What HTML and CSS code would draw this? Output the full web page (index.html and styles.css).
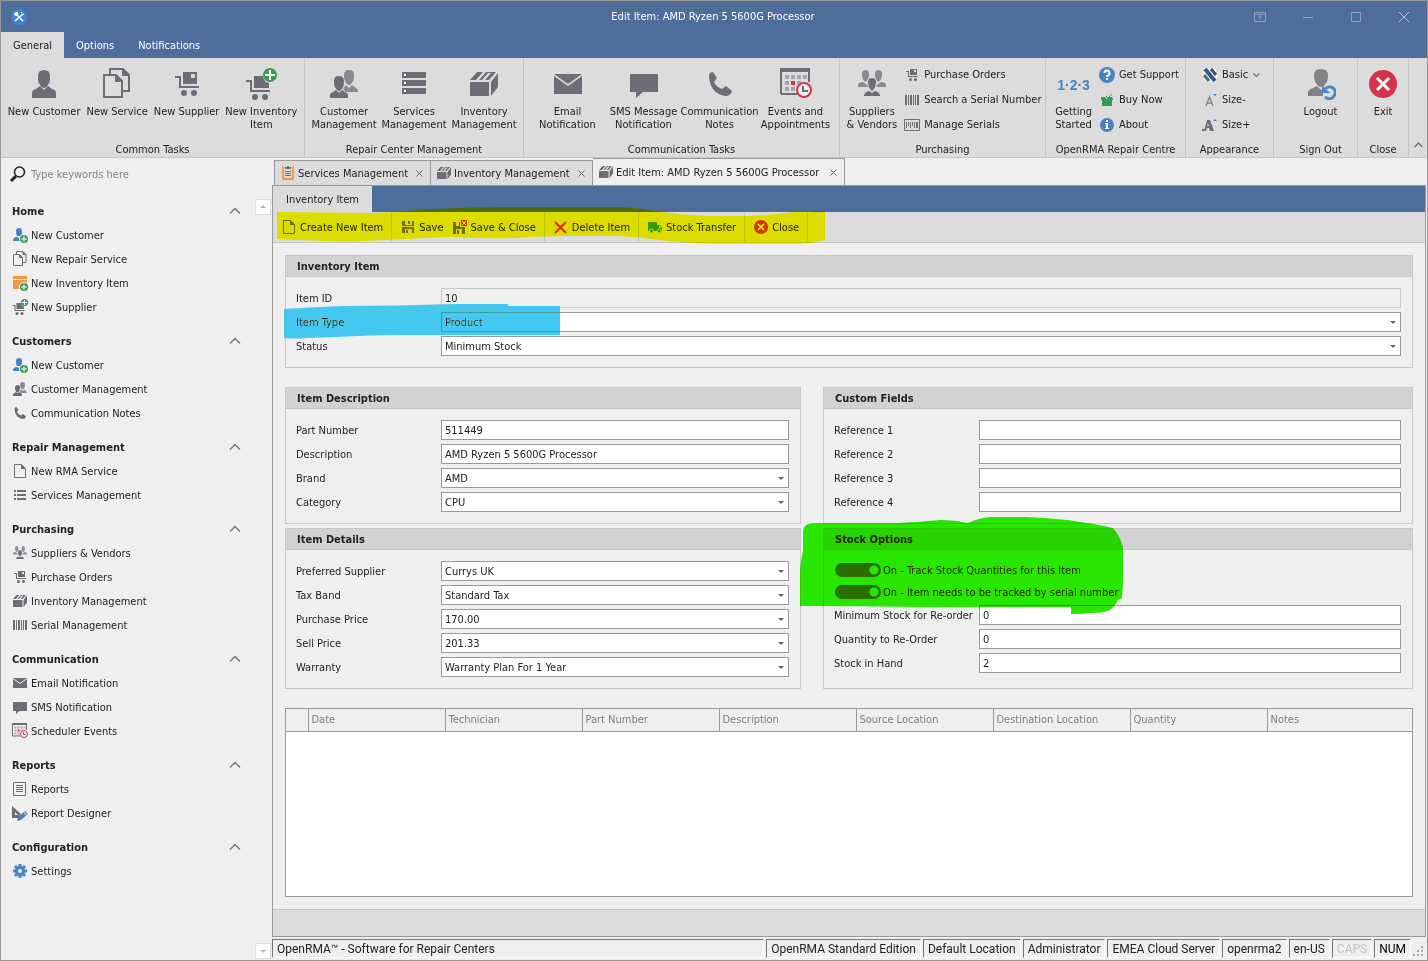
FILE: index.html
```html
<!DOCTYPE html>
<html lang="en">
<head>
<meta charset="utf-8">
<meta name="viewport" content="width=device-width, initial-scale=1">
<title>Edit Item: AMD Ryzen 5 5600G Processor</title>
<link rel="stylesheet" href="styles.css">
</head>
<body>
<svg class="sprite" aria-hidden="true">
  <symbol id="plus" viewBox="0 0 14 14"><circle cx="7" cy="7" r="7" fill="#3a9a55"/><path d="M7 2v10M2 7h10" stroke="#fff" stroke-width="2"/></symbol>
  <symbol id="person" viewBox="0 0 32 32"><path d="M10 8q0-6 6-6t6 6-1 7q-2 5-5 5t-5-5q-1-1-1-7zM4 30v-5q0-3 4-4l4-3 4 4 4-4 4 3q4 1 4 4v5z"/></symbol>
  <symbol id="docs" viewBox="0 0 32 32"><path d="M3 7h12l6 6v16H3zM9 7V1h13l6 6v16h-7" fill="none" stroke="currentColor" stroke-width="2"/><path d="M14 6l8 8h-8zM21 0l8 8h-8z"/></symbol>
  <symbol id="doc" viewBox="0 0 16 16"><path d="M2.500 1.500h7l4 4v9h-11z" fill="none" stroke="currentColor" stroke-width="1"/><path d="M9 1v5h5z"/></symbol>
  <symbol id="cart" viewBox="0 0 32 32"><path d="M4 8h6v2H4zM8 8h2v12H8zM8 18h20v2H8z"/><path d="M12 4h14v12H12zM20 6v4h4V6z" fill-rule="evenodd"/><circle cx="13" cy="25" r="3"/><circle cx="23" cy="25" r="3"/></symbol>
  <symbol id="cartplus" viewBox="0 0 32 32"><path d="M1 12h6v2H1zM5 12h2v12H5zM5 22h20v2H5zM9 8h9q1 7 6 7v5H9z"/><circle cx="10" cy="29" r="3"/><circle cx="20" cy="29" r="3"/><use href="#plus" x="18" y="0" width="14" height="14"/></symbol>
  <symbol id="people" viewBox="0 0 32 32"><g opacity=".75"><path d="M16 7q0-5 5-5t5 5-1 6q-2 4-4 4t-4-4q-1-1-1-6zM17 24q0-2-2-3l3-4 3 3 3-3 4 3q2 1 2 3v1z"/></g><path d="M6 13q0-5 5-5t5 5-1 6q-2 4-4 4t-4-4q-1-1-1-6zM2 30v-3q0-2 3-3l3-2 3 3 3-3 3 2q3 1 3 3v3z"/></symbol>
  <symbol id="servers" viewBox="0 0 32 32"><path d="M4 4h24v6H4zM4 12h24v6H4zM4 20h24v6H4z"/><path d="M6 6h2v2H6zM6 14h2v2H6zM6 22h2v2H6z" fill="#fff"/></symbol>
  <symbol id="crate" viewBox="0 0 32 32"><path d="M2 14h19v14H2zM23 14l7-9v14l-7 9zM2 12l7-8h6l-7 8zM11 12l7-8h10l-7 8h-4l6-7h-3l-6 7z"/></symbol>
  <symbol id="mail" viewBox="0 0 32 32"><path d="M2 6h28L16 16zM2 8l14 10L30 8v18H2z"/></symbol>
  <symbol id="sms" viewBox="0 0 32 32"><path d="M2 6h28v18H15l-7 6v-6H2z"/></symbol>
  <symbol id="phone" viewBox="0 0 32 32"><path d="M5 8q0-4 4-4l4 6-3 4q2 5 8 7l4-3 6 5q-1 5-7 5Q6 25 5 8z"/></symbol>
  <symbol id="calendar" viewBox="0 0 32 32"><path d="M1 26V1h28v13M1 26h16" fill="none" stroke="currentColor" stroke-width="2"/><path d="M0 0h30v4H0z"/><path d="M5 7h4v4H5zM11 7h4v4h-4zM17 7h4v4h-4zM23 7h4v4h-4zM5 13h4v4H5zM17 13h4v3h-4zM5 19h4v4H5zM11 19h4v4h-4z" opacity=".5"/><path d="M11 13h4v4h-4z" fill="#d5334b"/><circle cx="24" cy="22" r="7" fill="#eee" stroke="#d5334b" stroke-width="2"/><path d="M23 18v5h5" fill="none" stroke="currentColor" stroke-width="2"/></symbol>
  <symbol id="team" viewBox="0 0 32 32"><g opacity=".75"><path d="M6 6q0-4 3.500-4T13 6q0 6-3.500 8Q6 12 6 6zM19 6q0-4 3.500-4T26 6q0 6-3.500 8Q19 12 19 6zM2 18q0-4 5-4l3 2 2 2v1H2zM20 18l2-2 3-2q5 0 5 4v1h-9z"/></g><path d="M12 14q0-4 4-4t4 4q0 6-4 9-4-3-4-9zM8 28q0-4 5-5l3 2 3-2q5 1 5 5z"/></symbol>
  <symbol id="bars" viewBox="0 0 16 16"><path d="M1 3h2v10H1zM4 3h1v10H4zM6 3h2v10H6zM9 3h1v10H9zM11 3h1v10h-1zM13 3h2v10h-2z"/></symbol>
  <symbol id="barbox" viewBox="0 0 16 16"><path d="M.5 2.500h15v11H.5z" fill="none" stroke="currentColor"/><path d="M2 5h1v6H2zM4 5h1v4H4zM6 5h1v6H6zM8 5h1v4H8zM10 5h1v6h-1zM12 5h2v6h-2z"/></symbol>
  <symbol id="help" viewBox="0 0 16 16"><circle cx="8" cy="8" r="8" fill="#4583c4"/><path d="M5.500 6q0-2.500 2.500-2.500T10.500 6 8 9v1" fill="none" stroke="#fff" stroke-width="2"/><path d="M7 11h2v2H7z" fill="#fff"/></symbol>
  <symbol id="info" viewBox="0 0 16 16"><circle cx="8" cy="8" r="7" fill="#4583c4"/><path d="M7 3h2v2H7zM6 6h3v5h1v1H6v-1h1V7H6z" fill="#fff"/></symbol>
  <symbol id="buy" viewBox="0 0 16 16"><path d="M3 8h10v6H3zM2 5h4l2 2 2-2h3l1 2v1H2z" fill="#3a9a55"/><path d="M7 4l2 2 4-4" fill="none" stroke="#3a9a55"/></symbol>
  <symbol id="skin" viewBox="0 0 16 16"><path d="M3 1h10l3 6-2 8H4L0 8z" fill="#f4f4f4"/><path d="M3 2l10 12" stroke="#34568c" stroke-width="4"/><path d="M9 2l5 6" stroke="#4c4470" stroke-width="3"/><path d="M2 8l5 6" stroke="#3c7d68" stroke-width="3"/></symbol>
  <symbol id="aminus" viewBox="0 0 16 16"><path d="M4 14l3.500-9L11 14M5 11h5" fill="none" stroke="#85858a" stroke-width="1.500"/><path d="M11 2h4l-2 2z" fill="#4583c4"/></symbol>
  <symbol id="aplus" viewBox="0 0 16 16"><path d="M2 14L5 3h3l4 11H8l-1-3H5l-1 3zM6 6L5 9h2z" fill-rule="evenodd"/><path d="M0 12h4v2H0z"/><path d="M11 4h4l-2-2z" fill="#4583c4"/></symbol>
  <symbol id="logout" viewBox="0 0 32 32"><path d="M10 7q0-6 7-6t7 6-2 8q-2 4-5 4t-5-4q-2-2-2-8zM4 28v-4q0-2 5-4l4-2 4 4 2-2v8z" fill="#838383"/><path d="M21 21q4-4 8-1t1 8-9 1" fill="none" stroke="#4a88c7" stroke-width="3"/><path d="M18 17v8h8z" fill="#4a88c7"/></symbol>
  <symbol id="exit" viewBox="0 0 32 32"><circle cx="16" cy="16" r="14" fill="#d5334b"/><path d="M10 10l12 12M22 10L10 22" stroke="#fff" stroke-width="3"/></symbol>
  <symbol id="newcust" viewBox="0 0 16 16"><path d="M4 4q0-3 3-3t3 3-1 5H5Q4 7 4 4zM1 14q0-4 4-4l2 1 2-1 3 1v3z" fill="#4583c4"/><circle cx="11.500" cy="12" r="4.500" fill="#f0f0f0"/><use href="#plus" x="8" y="8" width="8" height="8"/></symbol>
  <symbol id="newinv" viewBox="0 0 16 16"><path d="M1 1h14v3H1zM1 5h14v9H1z" fill="#f29a42"/><circle cx="12" cy="12" r="5" fill="#f0f0f0"/><use href="#plus" x="8" y="8" width="8" height="8"/></symbol>
  <symbol id="list" viewBox="0 0 16 16"><path d="M2 3h2v2H2zM2 7h2v2H2zM2 11h2v2H2zM5 3h9v2H5zM5 7h9v2H5zM5 11h9v2H5z"/></symbol>
  <symbol id="report" viewBox="0 0 16 16"><path d="M1.500 1.500h12v13h-12zM4 4.500h7M4 6.500h7M4 8.500h7M4 10.500h7" fill="none" stroke="currentColor"/></symbol>
  <symbol id="designer" viewBox="0 0 16 16"><path d="M0 1v12h6l3-4zM3 7l3 3H3z" fill-rule="evenodd"/><path d="M5 16l1-4 7-6 3 3-7 6z" fill="#4583c4"/><path d="M12 7l2 3" stroke="#f0f0f0"/></symbol>
  <symbol id="gear" viewBox="0 0 16 16"><g stroke="#4583c4"><path d="M8 1v14M1 8h14M3 3l10 10M13 3L3 13" stroke-width="3"/></g><circle cx="8" cy="8" r="5" fill="#4583c4"/><circle cx="8" cy="8" r="2" fill="#f0f0f0"/></symbol>
  <symbol id="clip" viewBox="0 0 16 16"><path d="M4 2H3v12h10V2h-1" fill="none" stroke="#f29a42" stroke-width="2"/><path d="M5 2h2V1h2v1h2v2H5z"/><path d="M5 6.500h6M5 8.500h6M5 10.500h6" stroke="currentColor"/></symbol>
  <symbol id="save" viewBox="0 0 16 16"><path d="M2 2h12v5H2zM2 8h12v6H2zM5 2v4h7V2zM5 10v4h7v-4z" fill-rule="evenodd"/><path d="M8 2h2v3H8zM6 11h2v3H6z"/></symbol>
  <symbol id="saveclose" viewBox="0 0 16 16"><path d="M1 3h7v5h5v7H1zM4 3v4h3V3zM4 10v5h6v-5z" fill-rule="evenodd"/><path d="M5 11h2v4H5z"/><path d="M9 1h6v6H9z" fill="#d5334b"/><path d="M10 2l4 4M14 2l-4 4" stroke="#fff"/></symbol>
  <symbol id="delete" viewBox="0 0 16 16"><path d="M2 3l11 11M13 3L2 14" stroke="#d5334b" stroke-width="2"/></symbol>
  <symbol id="truck" viewBox="0 0 16 16"><path d="M1 3h9v9H1zM10 6h3l2 3v3h-5z" fill="#3a9a55"/><path d="M12 7h1l1 2h-2z" fill="#dcdcdc"/><g fill="#3a9a55" stroke="#dcdcdc"><circle cx="4.500" cy="12" r="2"/><circle cx="12" cy="12" r="2"/></g></symbol>
  <symbol id="x" viewBox="0 0 7 7"><path d="M.5 .5l6 6M6.500 .5l-6 6" stroke="currentColor" fill="none"/></symbol>
  <symbol id="up" viewBox="0 0 12 8"><path d="M1 6.500l5-5 5 5" fill="none" stroke="currentColor" stroke-width="1.500"/></symbol>
  <symbol id="down" viewBox="0 0 12 8"><path d="M2 2l4 4 4-4" fill="none" stroke="currentColor" stroke-width="1.500"/></symbol>
</svg>

<div class="window">
  <header class="titlebar">
    <svg class="logo" viewBox="0 0 16 16" aria-hidden="true"><circle cx="8" cy="8" r="8" fill="#3f86cf"/><path d="M4 4l8 8M12 5l-8 7" stroke="#fff" stroke-width="1.500"/><path d="M3 5l3-2 1 2-2 2zM10 4l1-1M13 5l-2 1" stroke="#fff" fill="#fff"/></svg>
    <h1>Edit Item: AMD Ryzen 5 5600G Processor</h1>
    <div class="winbtns">
      <button aria-label="Ribbon options"><svg viewBox="0 0 12 12"><path d="M.5 1.500h11v9H.5zM.5 3.500h11M6 9V5M4 6.500l2-2 2 2"/></svg></button>
      <button aria-label="Minimise"><svg viewBox="0 0 12 12"><path d="M1 6.500h10"/></svg></button>
      <button aria-label="Maximise"><svg viewBox="0 0 12 12"><path d="M1.500 1.500h9v9h-9z"/></svg></button>
      <button class="bright" aria-label="Close window"><svg viewBox="0 0 12 12"><path d="M1 1l10 10M11 1L1 11"/></svg></button>
    </div>
  </header>
  <nav class="menu"><button class="on">General</button><button>Options</button><button>Notifications</button></nav>

  <section class="ribbon">
    <div class="group g-common"><div class="tools">
      <button class="big"><svg><use href="#person"/></svg>New Customer</button>
      <button class="big"><svg><use href="#docs"/></svg>New Service</button>
      <button class="big"><svg><use href="#cart"/></svg>New Supplier</button>
      <button class="big"><svg><use href="#cartplus"/></svg>New Inventory<br>Item</button>
    </div><h2>Common Tasks</h2></div>
    <div class="group g-repair"><div class="tools">
      <button class="big"><svg><use href="#people"/></svg>Customer<br>Management</button>
      <button class="big"><svg><use href="#servers"/></svg>Services<br>Management</button>
      <button class="big"><svg><use href="#crate"/></svg>Inventory<br>Management</button>
    </div><h2>Repair Center Management</h2></div>
    <div class="group g-comm"><div class="tools wide">
      <button class="big"><svg><use href="#mail"/></svg>Email<br>Notification</button>
      <button class="big"><svg><use href="#sms"/></svg>SMS Message<br>Notification</button>
      <button class="big"><svg><use href="#phone"/></svg>Communication<br>Notes</button>
      <button class="big"><svg><use href="#calendar"/></svg>Events and<br>Appointments</button>
    </div><h2>Communication Tasks</h2></div>
    <div class="group g-purch"><div class="tools">
      <button class="big"><svg><use href="#team"/></svg>Suppliers<br>&amp; Vendors</button>
      <div class="stack">
        <button><svg><use href="#cart"/></svg>Purchase Orders</button>
        <button><svg><use href="#bars"/></svg>Search a Serial Number</button>
        <button><svg><use href="#barbox"/></svg>Manage Serials</button>
      </div>
    </div><h2>Purchasing</h2></div>
    <div class="group g-centre"><div class="tools">
      <button class="big"><span class="count">1·2·3</span>Getting<br>Started</button>
      <div class="stack">
        <button><svg><use href="#help"/></svg>Get Support</button>
        <button><svg><use href="#buy"/></svg>Buy Now</button>
        <button><svg><use href="#info"/></svg>About</button>
      </div>
    </div><h2>OpenRMA Repair Centre</h2></div>
    <div class="group g-look"><div class="tools">
      <div class="stack">
        <button><svg><use href="#skin"/></svg>Basic<svg class="tiny"><use href="#down"/></svg></button>
        <button><svg><use href="#aminus"/></svg>Size-</button>
        <button><svg><use href="#aplus"/></svg>Size+</button>
      </div>
    </div><h2>Appearance</h2></div>
    <div class="group g-sign"><div class="tools"><button class="big"><svg><use href="#logout"/></svg>Logout</button></div><h2>Sign Out</h2></div>
    <div class="group g-close"><div class="tools"><button class="big"><svg><use href="#exit"/></svg>Exit</button></div><h2>Close</h2></div>
    <button class="collapse" aria-label="Collapse ribbon"><svg><use href="#up"/></svg></button>
  </section>

  <div class="workspace">
    <aside class="sidebar">
      <label class="search"><svg viewBox="0 0 16 16"><circle cx="9.500" cy="6" r="5" fill="none" stroke="#222" stroke-width="1.500"/><path d="M6 10l-5 5" stroke="#222" stroke-width="3"/></svg><input type="search" placeholder="Type keywords here" aria-label="Search"></label>
      <div class="navwrap">
        <nav class="nav">
          <section><h3><button>Home<svg><use href="#up"/></svg></button></h3>
            <a href="#"><svg><use href="#newcust"/></svg>New Customer</a>
            <a href="#"><svg><use href="#docs"/></svg>New Repair Service</a>
            <a href="#"><svg><use href="#newinv"/></svg>New Inventory Item</a>
            <a href="#"><svg><use href="#cartplus"/></svg>New Supplier</a></section>
          <section><h3><button>Customers<svg><use href="#up"/></svg></button></h3>
            <a href="#"><svg><use href="#newcust"/></svg>New Customer</a>
            <a href="#"><svg><use href="#people"/></svg>Customer Management</a>
            <a href="#"><svg><use href="#phone"/></svg>Communication Notes</a></section>
          <section><h3><button>Repair Management<svg><use href="#up"/></svg></button></h3>
            <a href="#"><svg><use href="#doc"/></svg>New RMA Service</a>
            <a href="#"><svg><use href="#list"/></svg>Services Management</a></section>
          <section><h3><button>Purchasing<svg><use href="#up"/></svg></button></h3>
            <a href="#"><svg><use href="#team"/></svg>Suppliers &amp; Vendors</a>
            <a href="#"><svg><use href="#cart"/></svg>Purchase Orders</a>
            <a href="#"><svg><use href="#crate"/></svg>Inventory Management</a>
            <a href="#"><svg><use href="#bars"/></svg>Serial Management</a></section>
          <section><h3><button>Communication<svg><use href="#up"/></svg></button></h3>
            <a href="#"><svg><use href="#mail"/></svg>Email Notification</a>
            <a href="#"><svg><use href="#sms"/></svg>SMS Notification</a>
            <a href="#"><svg><use href="#calendar"/></svg>Scheduler Events</a></section>
          <section><h3><button>Reports<svg><use href="#up"/></svg></button></h3>
            <a href="#"><svg><use href="#report"/></svg>Reports</a>
            <a href="#"><svg><use href="#designer"/></svg>Report Designer</a></section>
          <section><h3><button>Configuration<svg><use href="#up"/></svg></button></h3>
            <a href="#"><svg><use href="#gear"/></svg>Settings</a></section>
        </nav>
        <div class="scroller">
          <button aria-label="Scroll up"><svg viewBox="0 0 14 14"><path d="M4 8l3-3 3 3z"/></svg></button>
          <button aria-label="Scroll down"><svg viewBox="0 0 14 14"><path d="M4 6h6L7 9z"/></svg></button>
        </div>
      </div>
    </aside>

    <main class="main">
      <div class="doctabs">
        <div class="doctab t1"><button class="name"><svg><use href="#clip"/></svg>Services Management</button><button class="x" aria-label="Close tab"><svg><use href="#x"/></svg></button></div>
        <div class="doctab t2"><button class="name"><svg><use href="#crate"/></svg>Inventory Management</button><button class="x" aria-label="Close tab"><svg><use href="#x"/></svg></button></div>
        <div class="doctab t3 on"><button class="name"><svg><use href="#crate"/></svg>Edit Item: AMD Ryzen 5 5600G Processor</button><button class="x" aria-label="Close tab"><svg><use href="#x"/></svg></button></div>
      </div>
      <div class="document">
        <div class="strip"><button class="on">Inventory Item</button></div>
        <div class="toolbar">
          <div class="set"><button><svg><use href="#doc"/></svg>Create New Item</button></div>
          <div class="set"><button><svg><use href="#save"/></svg>Save</button><button><svg><use href="#saveclose"/></svg>Save &amp; Close</button></div>
          <div class="set"><button><svg><use href="#delete"/></svg>Delete Item</button></div>
          <div class="set"><button><svg><use href="#truck"/></svg>Stock Transfer</button></div>
          <div class="set"><button><svg><use href="#exit"/></svg>Close</button></div>
          <svg class="mark mark-yellow" viewBox="0 0 552 40" aria-hidden="true"><path d="M4 6L97 7q24 0 48-3 44-3 88-3h115q18 1 34 4 26 4 52 5h40q24-1 48-4h18v-1l12 0v29q-16 4-30 4h-80q-30-1-56-4-22-3-40-4h-52q-26 0-52 2-34 1-67-1-42 2-85 4-18 1-37 0L4 33z"/></svg>
        </div>
        <form class="content">
          <fieldset class="panel">
            <h2>Inventory Item</h2>
            <div class="fields">
              <div class="row"><label for="f1">Item ID</label><input id="f1" value="10" readonly></div>
              <div class="row"><label for="f2">Item Type</label><span class="pick"><select id="f2"><option>Product</option></select></span></div>
              <div class="row"><label for="f3">Status</label><span class="pick"><select id="f3"><option>Minimum Stock</option></select></span></div>
            </div>
            <svg class="mark mark-cyan" viewBox="0 0 276 36" aria-hidden="true"><path d="M0 6q30-2 60-3 56 0 111-2h53v2h52v29H119q-34 0-67 2l-29 1q-12 1-23 0z"/></svg>
          </fieldset>
          <div class="columns">
            <div class="col">
              <fieldset class="panel">
                <h2>Item Description</h2>
                <div class="fields">
                  <div class="row"><label for="f4">Part Number</label><input id="f4" value="511449"></div>
                  <div class="row"><label for="f5">Description</label><input id="f5" value="AMD Ryzen 5 5600G Processor"></div>
                  <div class="row"><label for="f6">Brand</label><span class="pick"><select id="f6"><option>AMD</option></select></span></div>
                  <div class="row"><label for="f7">Category</label><span class="pick"><select id="f7"><option>CPU</option></select></span></div>
                </div>
              </fieldset>
              <fieldset class="panel">
                <h2>Item Details</h2>
                <div class="fields">
                  <div class="row"><label for="f8">Preferred Supplier</label><span class="pick"><select id="f8"><option>Currys UK</option></select></span></div>
                  <div class="row"><label for="f9">Tax Band</label><span class="pick"><select id="f9"><option>Standard Tax</option></select></span></div>
                  <div class="row"><label for="f10">Purchase Price</label><span class="pick"><input id="f10" value="170.00"></span></div>
                  <div class="row"><label for="f11">Sell Price</label><span class="pick"><input id="f11" value="201.33"></span></div>
                  <div class="row"><label for="f12">Warranty</label><span class="pick"><select id="f12"><option>Warranty Plan For 1 Year</option></select></span></div>
                </div>
              </fieldset>
            </div>
            <div class="col">
              <fieldset class="panel">
                <h2>Custom Fields</h2>
                <div class="fields">
                  <div class="row"><label for="f13">Reference 1</label><input id="f13"></div>
                  <div class="row"><label for="f14">Reference 2</label><input id="f14"></div>
                  <div class="row"><label for="f15">Reference 3</label><input id="f15"></div>
                  <div class="row"><label for="f16">Reference 4</label><input id="f16"></div>
                </div>
              </fieldset>
              <fieldset class="panel grow">
                <h2>Stock Options</h2>
                <div class="fields">
                  <div class="switches">
                    <label><input type="checkbox" role="switch" checked>On - Track Stock Quantities for this Item</label>
                    <label><input type="checkbox" role="switch" checked>On - Item needs to be tracked by serial number</label>
                  </div>
                  <div class="row"><label for="f17">Minimum Stock for Re-order</label><input id="f17" value="0"></div>
                  <div class="row"><label for="f18">Quantity to Re-Order</label><input id="f18" value="0"></div>
                  <div class="row"><label for="f19">Stock in Hand</label><input id="f19" value="2"></div>
                </div>
                <svg class="mark mark-green" viewBox="0 0 324 98" aria-hidden="true"><path d="M0 90V54q1-10 3-20V16q0-9 12-9h82q22-1 44-3 14 0 27 3 11-5 22-6h37q20 1 40 3 24 3 46 8 7 8 10 19v36l-1 15-4 2q-3 7-10 11-8 2-14 2-11 1-23 1v-7H120q-60-1-120-1z"/></svg>
              </fieldset>
            </div>
          </div>
          <div class="grid">
            <table>
              <colgroup><col class="c0"><col class="c1"><col class="c1"><col class="c1"><col class="c1"><col class="c1"><col class="c1"><col class="c1"><col></colgroup>
              <thead><tr><td></td><th>Date</th><th>Technician</th><th>Part Number</th><th>Description</th><th>Source Location</th><th>Destination Location</th><th>Quantity</th><th>Notes</th></tr></thead>
            </table>
          </div>
        </form>
        <div class="docfoot"></div>
      </div>
      <footer class="status">
        <span class="fill">OpenRMA™ - Software for Repair Centers</span>
        <span>OpenRMA Standard Edition</span><span>Default Location</span><span>Administrator</span><span>EMEA Cloud Server</span><span>openrma2</span><span>en-US</span><span class="off">CAPS</span><span class="num">NUM</span>
        <svg class="grip" viewBox="0 0 12 12" aria-hidden="true"><path d="M8 0h2v2H8zM8 4h2v2H8zM4 4h2v2H4zM8 8h2v2H8zM4 8h2v2H4zM0 8h2v2H0z"/></svg>
      </footer>
    </main>
  </div>
</div>
</body>
</html>
```
FILE: styles.css
```css
* { box-sizing: border-box; }
body {
  margin: 0;
  font: 11px/13px "DejaVu Sans Condensed", "Noto Sans", sans-serif;
  color: #222;
  background: #efefef;
}
button, input, select { font: inherit; color: inherit; margin: 0; }
button { border: 0; padding: 0; background: none; white-space: nowrap; }
h1, h2, h3 { margin: 0; font-size: 11px; font-weight: normal; }
svg { display: block; flex: none; fill: currentColor; }
.sprite { position: absolute; width: 0; height: 0; }

.window { min-height: 100vh; display: flex; flex-direction: column; border: 1px solid #999; }

/* title bar */
.titlebar {
  display: grid; grid-template-columns: 1fr auto 1fr; align-items: center;
  height: 31px; padding: 0 12px 0 10px; background: #4e6d9b; color: #fff;
}
.logo { width: 16px; height: 16px; }
.winbtns { display: flex; justify-content: flex-end; gap: 36px; padding-right: 5px; }
.winbtns svg { width: 12px; height: 12px; fill: none; stroke: #8ea2c2; }
.winbtns .bright svg { stroke: #b4c1d6; }
.menu { display: flex; height: 26px; background: #4e6d9b; }
.menu button { color: #fff; padding: 0 12px; }
.menu button.on { background: #dcdcdc; color: #222; }

/* ribbon */
.ribbon { display: flex; height: 100px; background: #dcdcdc; border-bottom: 1px solid #c6c6c6; }
.group { display: flex; flex-direction: column; flex: none; border-right: 1px solid #c6c6c6; }
.group h2 { text-align: center; height: 14px; white-space: nowrap; }
.tools { flex: 1; display: flex; justify-content: center; }
.g-common { width: 304px; }
.g-repair { width: 219px; }
.g-comm { width: 316px; }
.g-purch { width: 206px; }
.g-centre { width: 140px; }
.g-look { width: 88px; }
.g-sign { width: 84px; padding-left: 10px; }
.g-close { width: 51px; }
.big { display: flex; flex-direction: column; align-items: center; padding: 10px 3px 0; }
.big svg { width: 32px; height: 32px; margin-bottom: 5px; overflow: visible; color: #6d6d75; }
.wide .big { width: 76px; }
.g-repair .big { width: 70px; }
.stack { padding: 4px 0 0 4px; display: flex; flex-direction: column; align-items: flex-start; }
.stack button { display: flex; align-items: center; gap: 4px; height: 25px; }
.stack svg { width: 16px; height: 16px; color: #6d6d75; }
.stack .tiny { width: 9px; height: 6px; }
.count { height: 37px; padding-top: 9px; font: bold 14px/16px "Liberation Sans", Arial, sans-serif; color: #4583c4; }
.collapse { margin: auto auto 8px; color: #555; }
.collapse svg { width: 9px; height: 8px; }

/* sidebar */
.workspace { flex: 1; display: flex; min-height: 0; }
.sidebar { width: 271px; flex: none; display: flex; flex-direction: column; }
.search { display: flex; align-items: center; gap: 5px; height: 32px; padding-left: 9px; }
.search svg { width: 16px; height: 16px; }
.search input { flex: 1; min-width: 0; border: 0; padding: 0; background: none; outline: 0; }
.search input::placeholder { color: #848488; }
.navwrap { flex: 1; display: flex; padding: 9px 1px 1px 0; }
.nav { flex: 1; padding: 0 14px 0 11px; }
.nav section { margin-bottom: 10px; }
.nav h3 button { display: flex; width: 100%; height: 24px; align-items: center; justify-content: space-between; font-weight: bold; }
.nav h3 svg { width: 12px; height: 8px; color: #777; }
.nav a { display: flex; align-items: center; gap: 3px; height: 24px; color: inherit; text-decoration: none; }
.nav a svg { width: 16px; height: 16px; color: #6d6d75; overflow: visible; }
.scroller { display: flex; flex-direction: column; justify-content: space-between; }
.scroller button { width: 16px; height: 16px; border: 1px solid #dedede; background: #fff; }
.scroller svg { width: 14px; height: 14px; fill: #b5b5b5; }

/* document area */
.main { flex: 1; min-width: 0; display: flex; flex-direction: column; }
.doctabs { display: flex; align-items: flex-end; height: 27px; padding-left: 2px; }
.doctab { display: flex; align-items: center; justify-content: space-between; height: 25px; padding: 0 7px 0 5px; border: 1px solid #999; border-width: 1px 1px 0 1px; background: #dcdcdc; }
.doctab + .doctab { border-left: 0; }
.doctab.on { height: 27px; background: #efefef; }
.t1 { width: 157px; }
.t2 { width: 162px; }
.t3 { width: 252px; }
.doctab .name { display: flex; align-items: center; gap: 2px; }
.doctab .name svg { width: 16px; height: 16px; color: #6d6d75; }
.doctab .x svg { width: 7px; height: 7px; color: #666; }
.document { flex: 1; display: flex; flex-direction: column; margin-right: 1px; border: 1px solid #999; }
.strip { display: flex; height: 26px; background: #4e6d9b; }
.strip button { padding: 0 13px; background: #dcdcdc; }
.toolbar { position: relative; display: flex; height: 31px; background: #dcdcdc; border-bottom: 1px solid #c6c6c6; }
.set { display: flex; gap: 8px; padding: 0 8px; border-right: 1px solid #c6c6c6; }
.toolbar button { display: flex; align-items: center; gap: 3px; }
.toolbar button svg { width: 16px; height: 16px; color: #6d6d75; }

/* highlighter strokes */
.mark { position: absolute; pointer-events: none; mix-blend-mode: darken; }
.mark-yellow { left: 0; top: -6px; width: 552px; height: 40px; fill: #ff0; }
.mark-cyan { left: -2px; top: 47px; width: 276px; height: 36px; fill: #45c8f3; }
.mark-green { left: -24px; top: -13px; width: 324px; height: 98px; fill: #28e600; }

/* form */
.content { flex: 1; display: flex; flex-direction: column; padding: 12px; }
.panel { position: relative; margin: 0; min-width: 0; padding: 0 0 11px; border: 1px solid #c8c8c8; }
.panel.grow { flex: 1; }
.panel h2 { height: 21px; padding: 4px 11px; border-bottom: 1px solid #c8c8c8; background: #d2d2d2; font-weight: bold; }
.fields { display: flex; flex-direction: column; gap: 4px; padding: 11px 11px 0 10px; }
.row { display: grid; grid-template-columns: 145px 1fr; align-items: center; height: 20px; }
.row label { white-space: nowrap; }
.row input, .row select {
  width: 100%; min-width: 0; height: 20px; padding: 0 3px; border: 1px solid #999;
  border-radius: 0; background: #fff; outline: 0; appearance: none;
}
.row input[readonly] { background: #efefef; border-color: #c8c8c8; }
.pick { position: relative; display: block; }
.pick::after {
  content: ""; position: absolute; right: 5px; top: 9px;
  border: 3px solid transparent; border-top-color: #666; border-bottom: 0; pointer-events: none;
}
.columns { display: grid; grid-template-columns: 516fr 590fr; gap: 22px; margin: 19px 0; }
.col { display: flex; flex-direction: column; gap: 4px; }
.switches { display: flex; flex-direction: column; gap: 8px; padding: 2px 0 2px 1px; }
.switches label { display: flex; align-items: center; gap: 2px; height: 14px; }
.switches input { appearance: none; width: 46px; height: 14px; border-radius: 7px; background: radial-gradient(circle at 39px 7px, #efefef 4px, #6e6e6e 5px); }
.grid { flex: 1; border: 1px solid #999; background: #fff; }
.grid table { width: 100%; table-layout: fixed; border-collapse: collapse; }
.grid th, .grid td { height: 22px; padding: 0 3px; text-align: left; font-weight: normal; color: #7d7d80; background: #efefef; border: 1px solid #999; border-width: 0 0 1px 1px; white-space: nowrap; }
.grid td { border-left: 0; }
.c0 { width: 22px; }
.c1 { width: 137px; }
.docfoot { height: 27px; background: #dcdcdc; border-top: 1px solid #c6c6c6; }

/* status bar */
.status { display: flex; gap: 2px; height: 23px; padding: 2px 2px 2px 0; font: 12px/18px Roboto, "Open Sans", sans-serif; }
.status span { padding: 0 4px; border: 1px solid #fff; border-top-color: #777; border-left-color: #777; white-space: nowrap; }
.status .fill { flex: 1; min-width: 0; }
.status .off { color: #c4c4c4; }
.status .num { color: #000; }
.grip { width: 12px; height: 12px; align-self: flex-end; fill: #aaa; }
```
